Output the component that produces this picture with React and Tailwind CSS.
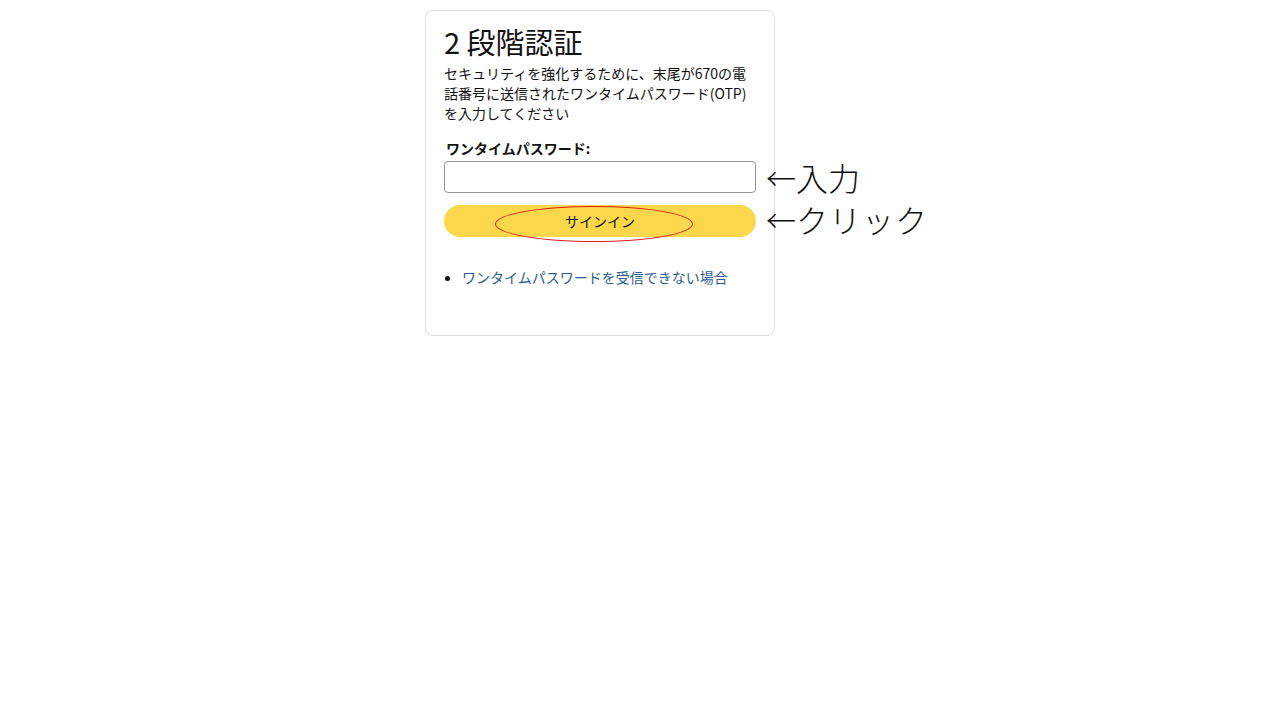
import React from 'react';

export default function App() {
  const jp = { fontFamily: '"Noto Sans CJK JP", "DejaVu Sans", sans-serif' };

  return (
    <div className="min-h-screen bg-white pt-[10px] pl-[425px] text-[#111]" style={jp}>
      <div className="flex items-start">
        {/* Card */}
        <div className="w-[350px] h-[326px] rounded-lg border border-[#dddddd] pt-[13px] px-[18px]">
          <h1 className="text-[29px] leading-[34px] font-normal">2 段階認証</h1>
          <p className="mt-[5px] text-[14px] leading-[20px]">
            セキュリティを強化するために、末尾が670の電話番号に送信されたワンタイムパスワード(OTP)を入力してください
          </p>

          <label className="block mt-[15px] ml-[2px] text-[14px] leading-[20px] font-bold">ワンタイムパスワード:</label>
          <input
            type="text"
            className="block mt-[3px] w-[312px] h-[32px] rounded-[4px] border border-[#949494] px-2 outline-none"
          />

          <div className="relative mt-[12px]">
            <button className="w-[312px] h-[32px] rounded-full bg-[#fdd74b] text-[14px] text-[#111]">
              サインイン
            </button>
            {/* red marker ellipse */}
            <div className="absolute left-[51px] top-[1px] w-[198px] h-[36px] rounded-[50%] border border-[#e0201c] pointer-events-none" />
          </div>

          <ul className="mt-[30px] pl-[18px] list-disc text-[14px] leading-[20px]">
            <li className="marker:text-[#111]">
              <a className="text-[#2a5d8f]" href="#">ワンタイムパスワードを受信できない場合</a>
            </li>
          </ul>
        </div>

        {/* Annotations */}
        <div className="ml-[-9px] pt-[146px] text-[32px] leading-[42px] font-light text-[#111]">
          <div className="flex items-center">
            <span className="text-[30px]">←</span>
            <span>入力</span>
          </div>
          <div className="flex items-center">
            <span className="text-[30px]">←</span>
            <span className="tracking-[1px]">クリック</span>
          </div>
        </div>
      </div>
    </div>
  );
}
